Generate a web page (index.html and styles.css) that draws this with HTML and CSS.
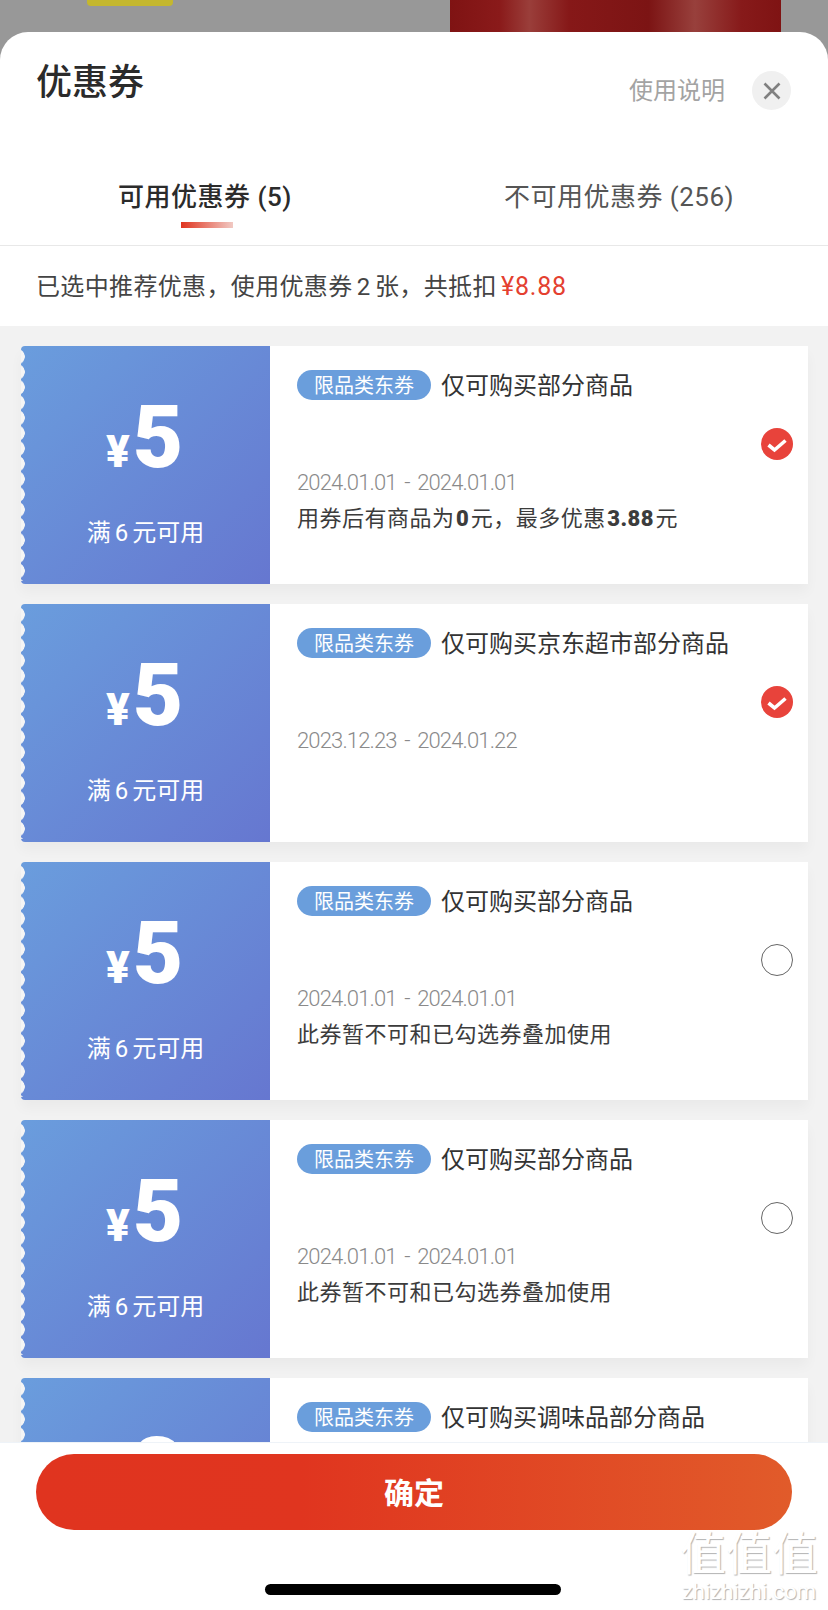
FILE: index.html
```html
<!DOCTYPE html>
<html lang="zh-CN">
<head>
    <meta charset="UTF-8">
    <meta name="viewport" content="width=device-width, initial-scale=1.0">
    <title>优惠券</title>
    <link rel="stylesheet" href="styles.css">
</head>
<body>
    <div class="backdrop">
        <span class="backdrop-tag"></span>
        <span class="backdrop-bottle"></span>
    </div>

    <div class="sheet">
        <header class="sheet-header">
            <h1 class="sheet-title">优惠券</h1>
            <a class="help-link">使用说明</a>
            <button class="close-btn" aria-label="关闭">
                <svg width="20" height="20" viewBox="0 0 20 20"><path d="M2.5 2.5 17.5 17.5M17.5 2.5 2.5 17.5" stroke="#808080" stroke-width="2.6" fill="none"/></svg>
            </button>
        </header>

        <nav class="tabs">
            <div class="tab tab-active">可用优惠券 (5)</div>
            <div class="tab">不可用优惠券 (256)</div>
        </nav>

        <p class="summary">已选中推荐优惠，使用优惠券 2 张，共抵扣 <span class="summary-price">¥8.88</span></p>

        <main class="coupon-list">
            <section class="coupon">
                <div class="coupon-left">
                    <div class="amount"><span class="amount-sign">¥</span><span class="amount-num">5</span></div>
                    <div class="condition">满 6 元可用</div>
                </div>
                <div class="coupon-right">
                    <div class="coupon-body">
                        <div class="coupon-head"><span class="coupon-tag">限品类东券</span><span class="coupon-name">仅可购买部分商品</span></div>
                        <div class="coupon-date">2024.01.01 - 2024.01.01</div>
                        <div class="coupon-note">用券后有商品为 <b>0</b> 元，最多优惠 <b>3.88</b> 元</div>
                    </div>
                    <svg class="radio" width="32" height="32" viewBox="0 0 32 32"><circle cx="16" cy="16" r="16" fill="#e8433b"/><path d="M7.5 17 13.5 22 24.5 12.5" stroke="#fff" stroke-width="3.6" fill="none"/></svg>
                </div>
            </section>

            <section class="coupon">
                <div class="coupon-left">
                    <div class="amount"><span class="amount-sign">¥</span><span class="amount-num">5</span></div>
                    <div class="condition">满 6 元可用</div>
                </div>
                <div class="coupon-right">
                    <div class="coupon-body">
                        <div class="coupon-head"><span class="coupon-tag">限品类东券</span><span class="coupon-name">仅可购买京东超市部分商品</span></div>
                        <div class="coupon-date">2023.12.23 - 2024.01.22</div>
                    </div>
                    <svg class="radio" width="32" height="32" viewBox="0 0 32 32"><circle cx="16" cy="16" r="16" fill="#e8433b"/><path d="M7.5 17 13.5 22 24.5 12.5" stroke="#fff" stroke-width="3.6" fill="none"/></svg>
                </div>
            </section>

            <section class="coupon">
                <div class="coupon-left">
                    <div class="amount"><span class="amount-sign">¥</span><span class="amount-num">5</span></div>
                    <div class="condition">满 6 元可用</div>
                </div>
                <div class="coupon-right">
                    <div class="coupon-body">
                        <div class="coupon-head"><span class="coupon-tag">限品类东券</span><span class="coupon-name">仅可购买部分商品</span></div>
                        <div class="coupon-date">2024.01.01 - 2024.01.01</div>
                        <div class="coupon-note">此券暂不可和已勾选券叠加使用</div>
                    </div>
                    <span class="radio radio-empty"></span>
                </div>
            </section>

            <section class="coupon">
                <div class="coupon-left">
                    <div class="amount"><span class="amount-sign">¥</span><span class="amount-num">5</span></div>
                    <div class="condition">满 6 元可用</div>
                </div>
                <div class="coupon-right">
                    <div class="coupon-body">
                        <div class="coupon-head"><span class="coupon-tag">限品类东券</span><span class="coupon-name">仅可购买部分商品</span></div>
                        <div class="coupon-date">2024.01.01 - 2024.01.01</div>
                        <div class="coupon-note">此券暂不可和已勾选券叠加使用</div>
                    </div>
                    <span class="radio radio-empty"></span>
                </div>
            </section>

            <section class="coupon">
                <div class="coupon-left">
                    <div class="amount"><span class="amount-sign">¥</span><span class="amount-num">3</span></div>
                </div>
                <div class="coupon-right">
                    <div class="coupon-body">
                        <div class="coupon-head"><span class="coupon-tag">限品类东券</span><span class="coupon-name">仅可购买调味品部分商品</span></div>
                    </div>
                </div>
            </section>
        </main>

        <footer class="sheet-footer">
            <button class="confirm-btn">确定</button>
            <div class="home-bar"></div>
        </footer>
    </div>

    <div class="watermark">
        <div class="watermark-logo">值值值</div>
        <div class="watermark-url">zhizhizhi.com</div>
    </div>
</body>
</html>
```

FILE: styles.css
```css
* {
    box-sizing: border-box;
}

html, body {
    margin: 0;
    padding: 0;
}

body {
    position: relative;
    width: 828px;
    height: 1610px;
    overflow: hidden;
    background-color: #989898;
    color: #333;
    font-family: Roboto, "Noto Sans CJK SC", sans-serif;
}

/* blurred page behind the sheet */
.backdrop {
    display: flex;
    height: 32px;
    padding-left: 87px;
}

.backdrop-tag {
    width: 86px;
    height: 6px;
    background-color: #c4b72e;
    border-radius: 0 0 4px 4px;
}

.backdrop-bottle {
    width: 331px;
    height: 32px;
    margin-left: 277px;
    background-color: #7f1313;
    background-image: linear-gradient(90deg, #7f1313 0, #8a1a1a 15%, #9a3e3a 24%, #861818 36%, #7c1414 60%, #98403c 74%, #871a1a 88%, #7f1313 100%);
}

.sheet {
    display: flex;
    flex-direction: column;
    height: 1578px;
    overflow: hidden;
    background-color: #fff;
    border-radius: 28px 28px 0 0;
}

.sheet-header {
    display: flex;
    align-items: flex-start;
    height: 133px;
    padding: 26px 37px 0 36px;
}

.sheet-title {
    flex-grow: 1;
    margin: 0;
    font-size: 36px;
    line-height: 50px;
    font-weight: 500;
    color: #2b2b2b;
}

.help-link {
    margin-top: 16px;
    font-size: 24px;
    line-height: 34px;
    color: #a3a3a3;
}

.close-btn {
    display: flex;
    align-items: center;
    justify-content: center;
    width: 39px;
    height: 39px;
    margin: 13px 0 0 27px;
    padding: 0;
    border: none;
    border-radius: 50%;
    background-color: #f0f0f0;
}

.tabs {
    display: flex;
    height: 81px;
    border-bottom: 1px solid #e8e8e8;
}

.tab {
    flex: 1;
    position: relative;
    padding: 14px 4px 0 0;
    text-align: center;
    font-size: 26px;
    line-height: 36px;
    letter-spacing: 0.5px;
    color: #555;
}

.tab-active {
    font-weight: 500;
    color: #2b2b2b;
}

.tab-active::after {
    content: "";
    position: absolute;
    left: 181px;
    top: 57px;
    width: 52px;
    height: 6px;
    background-image: linear-gradient(90deg, #e0341f, #f1c9c3);
}

.summary {
    height: 80px;
    margin: 0;
    padding: 0 36px;
    font-size: 24px;
    line-height: 81px;
    letter-spacing: 0.35px;
    word-spacing: -2px;
    color: #444;
}

.summary-price {
    font-size: 25px;
    letter-spacing: 0.8px;
    color: #e4402f;
}

.coupon-list {
    flex: 1;
    min-height: 0;
    overflow: hidden;
    padding: 20px 20px 0 21px;
    background-color: #f2f2f2;
}

.coupon {
    display: flex;
    height: 238px;
    margin-bottom: 20px;
    box-shadow: 0 8px 12px rgba(0, 0, 0, 0.035);
}

.coupon-left {
    position: relative;
    flex: 0 0 249px;
    padding-top: 39px;
    text-align: center;
    color: #fff;
    background-image: linear-gradient(135deg, #6a9ddd, #6677d0);
    border-radius: 4px 0 0 4px;
}

/* scalloped left edge */
.coupon-left::before {
    content: "";
    position: absolute;
    left: 0;
    top: 3px;
    bottom: 3px;
    width: 4px;
    background-image: radial-gradient(circle at -4px 50%, #f5f5f5 7.5px, transparent 8px);
    background-size: 4px 15.3px;
}

.amount {
    display: flex;
    align-items: baseline;
    justify-content: center;
    height: 104px;
    padding-right: 2px;
    font-weight: 900;
}

.amount-sign {
    margin-right: 3px;
    font-size: 44px;
    line-height: 104px;
}

.amount-num {
    font-size: 87px;
    line-height: 104px;
}

.condition {
    margin-top: 27px;
    font-size: 24px;
    line-height: 34px;
    word-spacing: -2px;
}

.coupon-right {
    flex: 1;
    display: flex;
    align-items: flex-start;
    background-color: #fff;
}

.coupon-body {
    flex: 1;
    padding: 24px 0 0 27px;
}

.coupon-head {
    display: flex;
    align-items: center;
    height: 30px;
}

.coupon-tag {
    width: 134px;
    height: 30px;
    margin-right: 10px;
    text-align: center;
    font-size: 20px;
    line-height: 32px;
    color: #fff;
    background-color: #6a9edc;
    border-radius: 15px;
}

.coupon-name {
    padding-top: 2px;
    font-size: 24px;
    line-height: 32px;
    color: #333;
}

.coupon-date {
    margin-top: 68px;
    font-weight: 300;
    font-size: 22px;
    line-height: 30px;
    letter-spacing: -0.85px;
    word-spacing: 3px;
    color: #8a8a8a;
}

.coupon-note {
    margin-top: 6px;
    font-size: 22px;
    line-height: 30px;
    letter-spacing: 0.5px;
    word-spacing: -4.5px;
    color: #3c3c3c;
}

.coupon-note b {
    font-weight: 900;
}

.radio {
    flex: 0 0 32px;
    width: 32px;
    height: 32px;
    margin: 82px 15px 0 0;
}

.radio-empty {
    border: 1px solid #666;
    border-radius: 50%;
    background-color: #fff;
}

.sheet-footer {
    height: 168px;
    padding: 11px 36px 0;
    background-color: #fff;
    border-top: 1px solid #eef3f8;
}

.confirm-btn {
    display: block;
    width: 756px;
    height: 76px;
    padding: 0 0 3px;
    border: none;
    border-radius: 38px;
    font-family: inherit;
    font-size: 30px;
    font-weight: 700;
    color: #fff;
    background-image: linear-gradient(90deg, #e0341f, #e0351f 35%, #e15b2a);
}

.home-bar {
    width: 296px;
    height: 11px;
    margin: 54px auto 0;
    border-radius: 6px;
    background-color: #000;
    transform: translateX(-1px);
}

/* site watermark over the bottom right corner */
.watermark {
    position: absolute;
    left: 676px;
    top: 1528px;
    width: 146px;
    text-align: center;
    color: #fff;
    text-shadow: 1px 1px 1px rgba(0, 0, 0, 0.3);
}

.watermark-logo {
    font-size: 46px;
    line-height: 52px;
}

.watermark-url {
    font-size: 22px;
    line-height: 24px;
}
```
